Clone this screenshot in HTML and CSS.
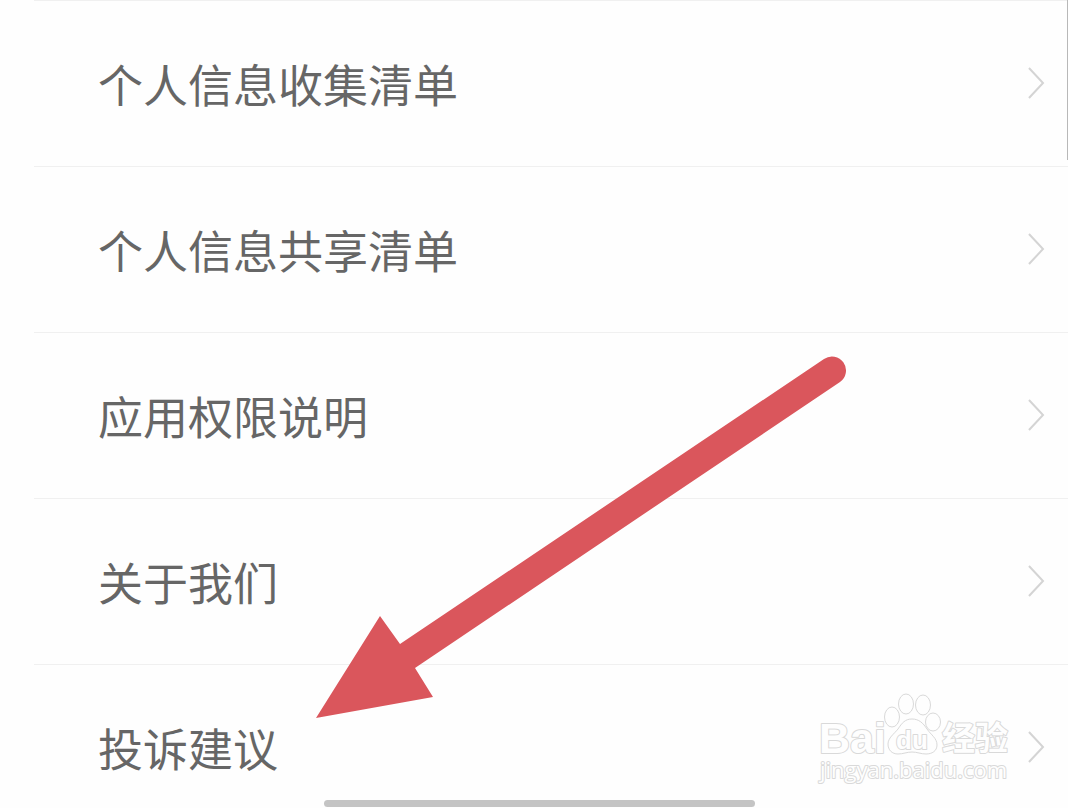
FILE: index.html
```html
<!DOCTYPE html>
<html lang="zh-CN">
<head>
  <meta charset="UTF-8" />
  <meta name="viewport" content="width=device-width, initial-scale=1.0" />
  <title>设置</title>
  <link rel="stylesheet" href="styles.css">
</head>
<body>
  <div class="screen">
    <nav class="menu">
      <a class="menu-item" href="#collect">
        <span>个人信息收集清单</span>
        <svg class="chevron" viewBox="0 0 18 34"><path d="M2 1 L16 16 L2 31" /></svg>
      </a>
      <a class="menu-item" href="#share">
        <span>个人信息共享清单</span>
        <svg class="chevron" viewBox="0 0 18 34"><path d="M2 1 L16 16 L2 31" /></svg>
      </a>
      <a class="menu-item" href="#permissions">
        <span>应用权限说明</span>
        <svg class="chevron" viewBox="0 0 18 34"><path d="M2 1 L16 16 L2 31" /></svg>
      </a>
      <a class="menu-item" href="#about">
        <span>关于我们</span>
        <svg class="chevron" viewBox="0 0 18 34"><path d="M2 1 L16 16 L2 31" /></svg>
      </a>
      <a class="menu-item" href="#feedback">
        <span>投诉建议</span>
        <svg class="chevron" viewBox="0 0 18 34"><path d="M2 1 L16 16 L2 31" /></svg>
      </a>
    </nav>

    <div class="scrollbar"></div>

    <!-- arrow pointing at the last item -->
    <svg class="arrow" viewBox="0 0 534 366">
      <path d="M3 363 L67 261 L87 289 L511 4 A14 14 0 0 1 527 27 L102 313 L120 342 Z" />
    </svg>

    <svg class="watermark" viewBox="0 0 200 104">
      <text class="wm-brand" x="4" y="65">Bai</text>
      <ellipse cx="77" cy="29" rx="7.5" ry="10" />
      <ellipse cx="91" cy="16" rx="7.5" ry="10" />
      <ellipse cx="108" cy="17" rx="7.5" ry="10" />
      <ellipse cx="118" cy="34" rx="7.5" ry="9" />
      <path d="M97 31 C104 31 108 35 112 41 C116 47 122 50 122 57 C122 63 117 66 111 66 C106 66 102 64 97 64 C92 64 88 66 83 66 C77 66 73 62 73 56 C73 50 79 46 83 41 C87 35 90 31 97 31 Z" />
      <text class="wm-du" x="81" y="61">du</text>
      <text class="wm-name" x="127" y="62">经验</text>
      <text class="wm-url" x="5" y="90">jingyan.baidu.com</text>
    </svg>

    <div class="home-bar"></div>
  </div>
</body>
</html>
```

FILE: styles.css
```css
body {
  margin: 0;
  background-color: #fefefe;
  font-family: "Noto Sans CJK SC", sans-serif;
}
.screen {
  position: relative;
  height: 100vh;
  overflow: hidden;
}
.menu {
  margin-left: 34px;
}
.menu-item {
  display: flex;
  align-items: center;
  justify-content: space-between;
  box-sizing: border-box;
  height: 166px;
  padding: 0 23px 0 64px;
  border-top: 1px solid #f0f0f0;
  color: #666;
  font-size: 45px;
  line-height: 64px;
  text-decoration: none;
}
.chevron {
  width: 18px;
  height: 34px;
  fill: none;
  stroke: #d4d4d4;
  stroke-width: 2;
}
.scrollbar {
  position: absolute;
  top: 0;
  right: 0;
  width: 1px;
  height: 160px;
  background-color: #b8b8b8;
}
.arrow {
  position: absolute;
  left: 313px;
  top: 355px;
  width: 534px;
  height: 366px;
  fill: #da565c;
}
.watermark {
  position: absolute;
  right: 53px;
  bottom: 16px;
  width: 200px;
  height: 104px;
  fill: #fefefe;
  stroke: #d9d9d9;
  stroke-width: 1;
}
.watermark text {
  paint-order: stroke;
  stroke-width: 2;
  stroke-linejoin: round;
}
.wm-brand {
  font-family: "Liberation Sans", sans-serif;
  font-size: 43px;
  font-weight: bold;
}
.wm-du {
  font-family: "Liberation Sans", sans-serif;
  font-size: 26px;
  font-weight: bold;
}
.wm-name {
  font-size: 33px;
  font-weight: bold;
}
.wm-url {
  font-family: "Open Sans", sans-serif;
  font-size: 22px;
}
.home-bar {
  position: absolute;
  left: 324px;
  bottom: 1px;
  width: 431px;
  height: 7px;
  border-radius: 4px;
  background-color: #c4c4c4;
}
```
